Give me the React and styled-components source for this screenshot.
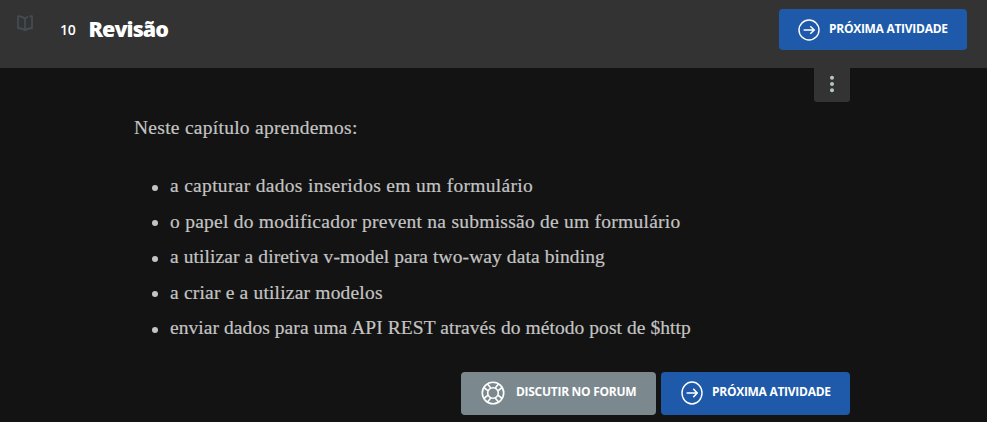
import React from "react";
import styled, { createGlobalStyle } from "styled-components";

const GlobalStyle = createGlobalStyle`
  * { box-sizing: border-box; }
  html, body { margin: 0; background: #131313; overflow: hidden; }
`;

const Page = styled.div`
  height: 422px;
  background: #131313;
  font-family: "Open Sans", sans-serif;
  color: #fff;
`;

const Header = styled.header`
  height: 68px;
  display: flex;
  align-items: flex-start;
  padding: 9px 20px 0 16px;
  background: #333;
`;

const BookSlot = styled.div`
  display: flex;
  width: 44px;
  padding-top: 5px;
`;

const Title = styled.h1`
  flex: 1;
  display: flex;
  align-items: center;
  margin: 0;
  height: 41px;
  line-height: 41px;
  font-size: 21.5px;
  font-weight: 800;
  letter-spacing: -0.95px;
`;

const TitleText = styled.span`
  padding-bottom: 2px;
`;

const Order = styled.span`
  width: 28.5px;
  font-size: 14px;
  font-weight: 600;
  letter-spacing: -0.3px;
`;

const Button = styled.button`
  display: flex;
  align-items: center;
  width: ${(p) => p.$width}px;
  height: ${(p) => p.$height}px;
  padding: 0 0 0 ${(p) => p.$inset || 20}px;
  border: 0;
  border-radius: 4px;
  background: ${(p) => (p.$muted ? "#7b898f" : "#1e5aa9")};
  color: #fff;
  font: 700 12px "Open Sans", sans-serif;
  letter-spacing: ${(p) => p.$tracking}px;
  white-space: nowrap;
`;

const ButtonLabel = styled.span`
  margin-left: ${(p) => p.$gap}px;
  padding-bottom: ${(p) => p.$lift || 2}px;
`;

const Content = styled.main`
  width: 716px;
  margin-left: 134px;
  color: #c4c4c4;
  font-family: "Source Serif Pro", "Liberation Serif", serif;
  font-size: 19.5px;
  -webkit-text-stroke: 0.2px #c4c4c4;
`;

const MenuRow = styled.div`
  display: flex;
  justify-content: flex-end;
`;

const MenuButton = styled.button`
  display: flex;
  align-items: center;
  justify-content: center;
  width: 36px;
  height: 34px;
  padding: 0 0 2px;
  border: 0;
  border-radius: 0 0 3px 3px;
  background: #333;
`;

const Intro = styled.p`
  margin: 8px 0 0;
  line-height: 36px;
`;

const Line = styled.span`
  letter-spacing: ${(p) => p.$tracking}px;
  white-space: nowrap;
`;

const Topics = styled.ul`
  margin: 22.4px 0 0;
  padding: 0;
  list-style: none;
`;

const Topic = styled.li`
  display: flex;
  align-items: center;
  height: 35.5px;
  line-height: 36px;
  padding-left: 18px;

  &::before {
    content: "";
    width: 6px;
    height: 6px;
    margin: 3px 12px 0 0;
    border-radius: 50%;
    background: #c4c4c4;
  }
`;

const Actions = styled.div`
  display: flex;
  justify-content: flex-end;
  gap: 5px;
  margin-top: 26.1px;
  -webkit-text-stroke: 0;
`;

const topics = [
  ["a capturar dados inseridos em um formulário", 0.31],
  ["o papel do modificador prevent na submissão de um formulário", 0.25],
  ["a utilizar a diretiva v-model para two-way data binding", 0.09],
  ["a criar e a utilizar modelos", 0.19],
  ["enviar dados para uma API REST através do método post de $http", 0.065],
];

const BookIcon = () => (
  <svg width="18" height="18" viewBox="0 0 18 18" fill="none" stroke="#444c51" strokeWidth="1.8" strokeLinejoin="round">
    <path d="M9 5C7.500 3.200 5 2.300 2 2.200v11.800c3 .2 5.400.8 7 2.200 1.600-1.400 4-2 7-2.200V2.200l-2.500.3M9 16.200V5c.7-1 1.700-1.800 3.200-2.300" />
  </svg>
);

const ArrowIcon = ({ size = 22, height = size }) => (
  <svg width={size} height={height} viewBox="0 0 22 22" preserveAspectRatio="none" fill="none" stroke="#fff">
    <circle cx="11" cy="11" r="10" strokeWidth="1.4" />
    <path d="M5.600 11h10.500M12.300 7.300l3.900 3.700-3.900 3.700" strokeWidth="1.500" />
  </svg>
);

const BuoyIcon = () => (
  <svg width="24" height="24" viewBox="0 0 24 24" fill="none" stroke="#fff" strokeWidth="1.6">
    <circle cx="12" cy="12" r="10.700" />
    <circle cx="12" cy="12" r="5.300" />
    <path d="M9.800 7.100 6.500 2.900M7.100 9.800 2.900 6.500M14.200 7.100l3.300-4.200M16.900 9.800l4.200-3.300M9.800 16.900l-3.300 4.200M7.100 14.200l-4.200 3.300M14.200 16.900l3.300 4.200M16.900 14.200l4.200 3.300" />
  </svg>
);

const DotsIcon = () => (
  <svg width="6" height="18" viewBox="0 0 6 18" fill="#b5c8c0">
    <circle cx="3" cy="2.700" r="2" />
    <circle cx="3" cy="9" r="2" />
    <circle cx="3" cy="15.300" r="2" />
  </svg>
);

export default function App() {
  return (
    <Page>
      <GlobalStyle />
      <Header>
        <BookSlot><BookIcon /></BookSlot>
        <Title><Order>10</Order><TitleText>Revisão</TitleText></Title>
        <Button $width={188} $height={41} $inset={19} $tracking={-0.28}>
          <ArrowIcon />
          <ButtonLabel $gap={9}>PRÓXIMA ATIVIDADE</ButtonLabel>
        </Button>
      </Header>
      <Content>
        <MenuRow>
          <MenuButton aria-label="Mais opções"><DotsIcon /></MenuButton>
        </MenuRow>
        <Intro><Line $tracking={0.27}>Neste capítulo aprendemos:</Line></Intro>
        <Topics>
          {topics.map(([text, tracking]) => (
            <Topic key={text}><Line $tracking={tracking}>{text}</Line></Topic>
          ))}
        </Topics>
        <Actions>
          <Button $muted $width={195} $height={43} $tracking={-0.28}>
            <BuoyIcon />
            <ButtonLabel $gap={11} $lift={4}>DISCUTIR NO FORUM</ButtonLabel>
          </Button>
          <Button $width={189} $height={43} $tracking={-0.28}>
            <ArrowIcon height={24} />
            <ButtonLabel $gap={9} $lift={4}>PRÓXIMA ATIVIDADE</ButtonLabel>
          </Button>
        </Actions>
      </Content>
    </Page>
  );
}
